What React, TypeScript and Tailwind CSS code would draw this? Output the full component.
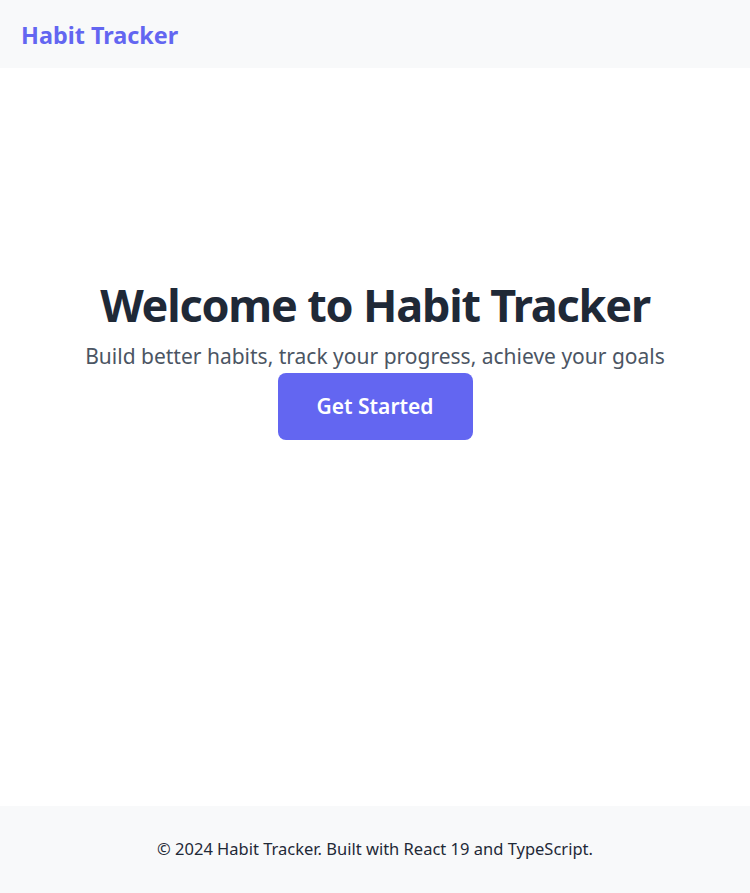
import React from 'react';

const font = { fontFamily: '"Noto Sans", "Open Sans", sans-serif' };

export default function App() {
  return (
    <div className="min-h-screen flex flex-col bg-white" style={font}>
      {/* Header */}
      <header className="h-[68px] bg-[#f8f9fa] flex items-center px-[21px] pt-[3px]">
        <h1 className="text-[23.4px] font-bold text-[#6366f1]">Habit Tracker</h1>
      </header>

      {/* Hero */}
      <main className="flex-1 flex flex-col items-center text-center pt-[208px]">
        <h2 className="text-[45px] font-bold text-[#1f2937] leading-[58px] tracking-[-1.2px]">
          Welcome to Habit Tracker
        </h2>
        <p className="mt-[6px] text-[21px] text-[#4b5563] leading-[33px]">
          Build better habits, track your progress, achieve your goals
        </p>
        <button className="w-[195px] h-[67px] rounded-lg bg-[#6366f1] text-white text-[21px] font-semibold">
          Get Started
        </button>
      </main>

      {/* Footer */}
      <footer className="h-[87px] bg-[#f8f9fa] flex items-center justify-center">
        <p className="text-[16.5px] text-[#1f2937]">© 2024 Habit Tracker. Built with React 19 and TypeScript.</p>
      </footer>
    </div>
  );
}
